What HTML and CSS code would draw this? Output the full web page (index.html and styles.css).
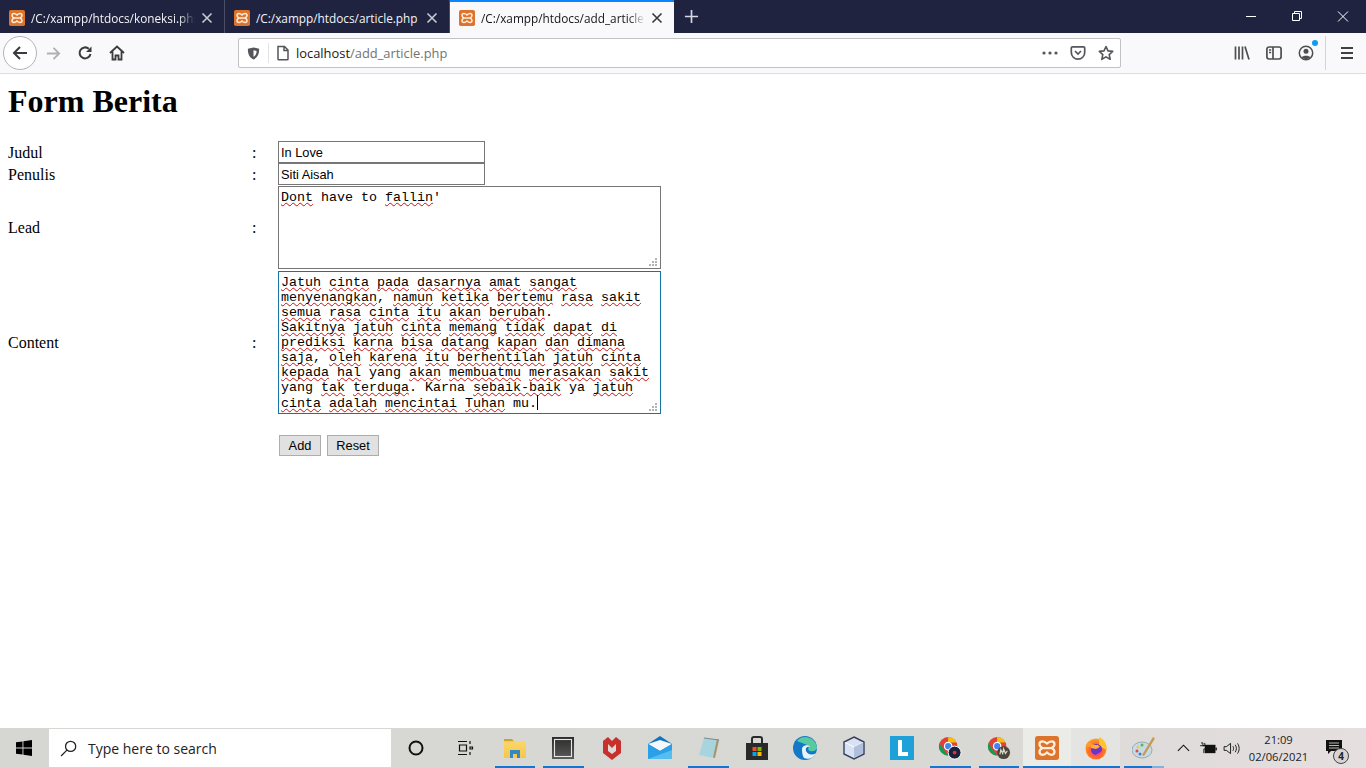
FILE: index.html
```html
<!DOCTYPE html>
<html lang="id">
<head>
<meta charset="utf-8">
<title>Form Berita</title>
<link rel="stylesheet" href="styles.css">
</head>
<body>
<svg class="defs" width="0" height="0" aria-hidden="true">
  <defs>
    <radialGradient id="fx" cx="50%" cy="60%" r="60%">
      <stop offset="0" stop-color="#ff3d7a"/>
      <stop offset=".55" stop-color="#ff6a2a"/>
      <stop offset="1" stop-color="#ffa51f"/>
    </radialGradient>
    <linearGradient id="blk" x1="0" y1="0" x2="0" y2="1">
      <stop offset="0" stop-color="#2c2c2c"/>
      <stop offset="1" stop-color="#5a5a5a"/>
    </linearGradient>
    <linearGradient id="fold" x1="0" y1="0" x2="0" y2="1">
      <stop offset="0" stop-color="#fcd66a"/>
      <stop offset="1" stop-color="#f5c64a"/>
    </linearGradient>
  </defs>
  <symbol id="xampp" viewBox="0 0 16 16">
    <rect x="0" y="0" width="16" height="16" rx="1.800" fill="#de742c"/>
    <path d="M5 3.500C3.500 3.500 3 4.500 3 5.500 3 6.500 3.800 7.400 5 8 3.800 8.600 3 9.500 3 10.500 3 11.500 3.500 12.500 5 12.500 6 12.500 7 12 8 11 9 12 10 12.500 11 12.500 12.500 12.500 13 11.500 13 10.500 13 9.500 12.200 8.600 11 8 12.200 7.400 13 6.500 13 5.500 13 4.500 12.500 3.500 11 3.500 10 3.500 9 4 8 5 7 4 6 3.500 5 3.500ZM5.500 8H10.500" fill="none" stroke="#fdeedd" stroke-width="1.500"/>
  </symbol>
  <symbol id="close" viewBox="0 0 12 12">
    <path d="M1.500 1.500l9 9M10.500 1.500l-9 9" fill="none" stroke="currentColor" stroke-width="1.600"/>
  </symbol>
  <symbol id="grip" viewBox="0 0 9 9">
    <path d="M6 0h2v2H6zM3 3h2v2H3zM6 3h2v2H6zM0 6h2v2H0zM3 6h2v2H3zM6 6h2v2H6z" fill="#b4b4b4"/>
  </symbol>
</svg>
<div class="window">
  <div class="tabbar">
    <div class="tab">
      <svg class="favicon"><use href="#xampp"/></svg>
      <span class="tab-title">/C:/xampp/htdocs/koneksi.php</span>
      <svg class="tab-close"><use href="#close"/></svg>
    </div>
    <div class="tab">
      <svg class="favicon"><use href="#xampp"/></svg>
      <span class="tab-title">/C:/xampp/htdocs/article.php</span>
      <svg class="tab-close"><use href="#close"/></svg>
    </div>
    <div class="tab tab-active">
      <svg class="favicon"><use href="#xampp"/></svg>
      <span class="tab-title">/C:/xampp/htdocs/add_article.php</span>
      <svg class="tab-close"><use href="#close"/></svg>
    </div>
    <svg class="newtab" viewBox="0 0 16 16"><path d="M8 1v14M1 8h14" stroke="#d6d7e0" stroke-width="1.800" fill="none"/></svg>
    <div class="win-controls">
      <svg class="win-btn" viewBox="0 0 46 33"><path d="M18 16.500h10" stroke="#fff" stroke-width="1" fill="none"/></svg>
      <svg class="win-btn" viewBox="0 0 46 33"><path d="M18.500 13.500h7v7h-7zM20.500 13.500v-2h7v7h-2" stroke="#fff" stroke-width="1" fill="none"/></svg>
      <svg class="win-btn" viewBox="0 0 46 33"><path d="M18 11.500l10 10M28 11.500l-10 10" stroke="#fff" stroke-width="1" fill="none"/></svg>
    </div>
  </div>
  <div class="toolbar">
    <div class="back-btn">
      <svg viewBox="0 0 18 18" class="ic"><path d="M16 9H3M9 3L3 9l6 6" fill="none" stroke="#3a3a3f" stroke-width="2"/></svg>
    </div>
    <svg viewBox="0 0 18 18" class="ic nav nav-fwd"><path d="M2 9h13M9 3l6 6-6 6" fill="none" stroke="#b1b1b3" stroke-width="2"/></svg>
    <svg viewBox="0 0 16 16" class="ic nav nav-reload"><path d="M13.500 9A5.500 5.500 0 1 1 11.800 3.800" fill="none" stroke="#3a3a3f" stroke-width="2"/><path d="M14.500 1.500v5.500H9z" fill="#3a3a3f"/></svg>
    <svg viewBox="0 0 16 16" class="ic nav"><path d="M1 8l7-6.500L15 8M3.500 6.500V14.500h3v-4h3v4h3V6.500" fill="none" stroke="#3a3a3f" stroke-width="1.800"/></svg>
    <div class="urlbar">
      <svg viewBox="0 0 16 16" class="ic shield"><path d="M8 1.500l6 1.500c0 5-1 9-6 11.500C3 12 2 8 2 3zM8 4.500l3.300.8C11.200 8 10.500 10 8 11.500z" fill="#55555b" fill-rule="evenodd"/></svg>
      <span class="url-sep"></span>
      <svg viewBox="0 0 16 16" class="ic page"><path d="M3 1.500h6.500L13 5v9a.8.8 0 0 1-.8.8H3.800A.8.8 0 0 1 3 14zM9 1.500V5.500h4" fill="none" stroke="#55555b" stroke-width="1.500"/></svg>
      <span class="url-text">localhost<span class="url-path">/add_article.php</span></span>
      <span class="url-space"></span>
      <svg viewBox="0 0 16 4" class="dots"><circle cx="2" cy="2" r="1.600" fill="#55555b"/><circle cx="8" cy="2" r="1.600" fill="#55555b"/><circle cx="14" cy="2" r="1.600" fill="#55555b"/></svg>
      <svg viewBox="0 0 16 16" class="ic pocket"><path d="M2.500 1.800h11a1.200 1.200 0 0 1 1.200 1.200v4.500a6.700 6.700 0 0 1-13.400 0V3a1.200 1.200 0 0 1 1.200-1.200zM5 6l3 3 3-3" fill="none" stroke="#55555b" stroke-width="1.700"/></svg>
      <svg viewBox="0 0 16 16" class="ic star"><path d="M8 1.500l2 4.400 4.700.5-3.500 3.200 1 4.700L8 11.900l-4.200 2.400 1-4.700L1.300 6.400 6 5.900z" fill="none" stroke="#55555b" stroke-width="1.600" stroke-linejoin="round"/></svg>
    </div>
    <div class="tools">
      <svg viewBox="0 0 16 16" class="ic"><path d="M1.500 1.500V14.500M5 1.500V14.500M8.500 1.500V14.500M11 1.500l4 13" fill="none" stroke="#4d4d52" stroke-width="1.700"/></svg>
      <svg viewBox="0 0 16 16" class="ic"><rect x=".9" y="2" width="14.200" height="12" rx="2.200" fill="none" stroke="#4d4d52" stroke-width="1.700"/><path d="M7 2v12" stroke="#4d4d52" stroke-width="1.700"/><path d="M3 5h2.200M3 7.500h2.200" stroke="#4d4d52" stroke-width="1.300"/></svg>
      <div class="account">
        <svg viewBox="0 0 16 16" class="ic"><circle cx="8" cy="8" r="6.700" fill="none" stroke="#4d4d52" stroke-width="1.500"/><circle cx="8" cy="6.300" r="2.500" fill="#4d4d52"/><path d="M3.500 12.500c1-2.500 8-2.500 9 0L8 14.500z" fill="#4d4d52"/></svg>
        <span class="badge"></span>
      </div>
      <span class="tool-sep"></span>
      <svg viewBox="0 0 16 16" class="ic"><path d="M2 3h12M2 8h12M2 13h12" stroke="#3f3f44" stroke-width="1.800"/></svg>
    </div>
  </div>

  <main class="page-content">
    <h1 class="title">Form Berita</h1>
    <form class="form">
      <div class="row row-input">
        <label class="lbl">Judul</label><span class="colon">:</span>
        <input class="text-input" type="text" value="In Love">
      </div>
      <div class="row row-input">
        <label class="lbl">Penulis</label><span class="colon">:</span>
        <input class="text-input" type="text" value="Siti Aisah">
      </div>
      <div class="row row-lead">
        <label class="lbl">Lead</label><span class="colon">:</span>
        <div class="area area-lead"><span class="sp">Dont</span> have to <span class="sp">fallin</span>'<svg class="grip"><use href="#grip"/></svg></div>
      </div>
      <div class="row row-content">
        <label class="lbl">Content</label><span class="colon">:</span>
        <div class="area area-content"><span class="sp">Jatuh</span> <span class="sp">cinta</span> <span class="sp">pada</span> <span class="sp">dasarnya</span> <span class="sp">amat</span> <span class="sp">sangat</span>
<span class="sp">menyenangkan</span>, <span class="sp">namun</span> <span class="sp">ketika</span> <span class="sp">bertemu</span> <span class="sp">rasa</span> <span class="sp">sakit</span>
<span class="sp">semua</span> <span class="sp">rasa</span> <span class="sp">cinta</span> <span class="sp">itu</span> <span class="sp">akan</span> <span class="sp">berubah</span>.
<span class="sp">Sakitnya</span> <span class="sp">jatuh</span> <span class="sp">cinta</span> <span class="sp">memang</span> <span class="sp">tidak</span> <span class="sp">dapat</span> <span class="sp">di</span>
<span class="sp">prediksi</span> <span class="sp">karna</span> <span class="sp">bisa</span> <span class="sp">datang</span> <span class="sp">kapan</span> <span class="sp">dan</span> <span class="sp">dimana</span>
<span class="sp">saja</span>, <span class="sp">oleh</span> <span class="sp">karena</span> <span class="sp">itu</span> <span class="sp">berhentilah</span> <span class="sp">jatuh</span> <span class="sp">cinta</span>
<span class="sp">kepada</span> <span class="sp">hal</span> yang <span class="sp">akan</span> <span class="sp">membuatmu</span> <span class="sp">merasakan</span> <span class="sp">sakit</span>
yang <span class="sp">tak</span> <span class="sp">terduga</span>. Karna <span class="sp">sebaik-baik</span> ya <span class="sp">jatuh</span>
<span class="sp">cinta</span> <span class="sp">adalah</span> <span class="sp">mencintai</span> <span class="sp">Tuhan</span> mu.<span class="caret"></span><svg class="grip"><use href="#grip"/></svg></div>
      </div>
      <div class="actions">
        <button class="btn btn-add" type="button">Add</button>
        <button class="btn btn-reset" type="button">Reset</button>
      </div>
    </form>
  </main>

  <footer class="taskbar">
    <div class="start">
      <svg viewBox="0 0 16 16" class="win-logo"><path d="M0 2.300L6.500 1.400V7.500H0zM7.400 1.300L16 0V7.500H7.400zM0 8.500H6.500V14.600L0 13.700zM7.400 8.500H16V16L7.400 14.700z" fill="#000"/></svg>
    </div>
    <div class="search">
      <svg viewBox="0 0 16 16" class="search-ic"><circle cx="10" cy="6" r="4.800" fill="none" stroke="#222" stroke-width="1.200"/><path d="M6.500 9.500L1 15" stroke="#222" stroke-width="1.200"/></svg>
      <span class="search-text">Type here to search</span>
    </div>
    <div class="tb-item"><svg viewBox="0 0 18 18" class="tb-ic"><circle cx="9" cy="9" r="6.500" fill="none" stroke="#111" stroke-width="2"/></svg></div>
    <div class="tb-item"><svg viewBox="0 0 18 18" class="tb-ic"><path d="M2 2.500h9M2 15.500h9M3.500 6h7v6h-7zM14 2v3M14 8h2.500v2H14zM14 13v3" fill="none" stroke="#111" stroke-width="1.200"/></svg></div>
    <div class="tb-item tb-on tb-first"><svg viewBox="0 0 24 24" class="tb-ic-lg"><path d="M1 3h8l2 2.500H1z" fill="#cfa32a"/><path d="M1 5.500h22V22H1z" fill="url(#fold)"/><path d="M7 14h10v8h-3v-4h-4v4H7z" fill="#3389c4"/></svg></div>
    <div class="tb-item tb-on"><svg viewBox="0 0 24 24" class="tb-ic-lg"><rect x="1" y="1" width="22" height="22" fill="url(#blk)"/><rect x="3.500" y="3.500" width="17" height="17" fill="none" stroke="#e6e6e6" stroke-width="1.100"/></svg></div>
    <div class="tb-item"><svg viewBox="0 0 24 24" class="tb-ic-lg"><path d="M3 5L8 1l4 4 4-4 5 4v12l-9 7-9-7z" fill="#c8302c"/><path d="M8 8l4 4 4-4v7l-4 3-4-3z" fill="#dcdbd8"/></svg></div>
    <div class="tb-item"><svg viewBox="0 0 24 24" class="tb-ic-lg"><path d="M0 8L12 0l12 8v15H0z" fill="#0f73bf"/><path d="M0 8l12-4 12 4-12 7z" fill="#f4f8fb"/><path d="M0 8l12 7 12-7v15H0z" fill="#2aa0e6"/><path d="M0 23l24-9v9z" fill="#56bdf0"/></svg></div>
    <div class="tb-item tb-on"><svg viewBox="0 0 24 24" class="tb-ic-lg"><path d="M7 2l15 2-5 18-15-3z" fill="#a8d4de"/><path d="M20 3l2 1-4 18-2-.5z" fill="#a99468"/><path d="M7 2l15 2" stroke="#7a8a92" stroke-width="1"/></svg></div>
    <div class="tb-item"><svg viewBox="0 0 24 24" class="tb-ic-lg"><path d="M1 7h22v17H1z" fill="#2a2a2a"/><path d="M7 8V3a2 2 0 0 1 2-2h6a2 2 0 0 1 2 2v5" fill="none" stroke="#2a2a2a" stroke-width="2"/><rect x="7.500" y="11" width="4" height="4" fill="#f25022"/><rect x="12.500" y="11" width="4" height="4" fill="#7fba00"/><rect x="7.500" y="16" width="4" height="4" fill="#00a4ef"/><rect x="12.500" y="16" width="4" height="4" fill="#ffb900"/></svg></div>
    <div class="tb-item"><svg viewBox="0 0 24 24" class="tb-ic-lg"><circle cx="12" cy="12" r="12" fill="#1478c8"/><path d="M4 5c5-7 18-5 20 6 .5 3-3 5-7 4-2.500-1-2-3-1-4-1.500-3-8-4-12-6z" fill="#58c9a0"/><path d="M9 13c0-4 7-5 8-2-3-1-5 1-4 4 1 3 6 5 10 2-2 5-8 7-12 5-1.500-2-2-6-2-9z" fill="#e8f4f8"/></svg></div>
    <div class="tb-item"><svg viewBox="0 0 24 24" class="tb-ic-lg"><path d="M12 1l10 5v12l-10 5-10-5V6z" fill="#d8e2f2" stroke="#36405e" stroke-width="1.400"/><path d="M3 6.500l9 4.500 9-4.500" fill="none" stroke="#fff" stroke-width="1"/><path d="M12 11v11l9-4.500v-11z" fill="#b0c0dc"/></svg></div>
    <div class="tb-item"><svg viewBox="0 0 24 24" class="tb-ic-lg"><rect width="24" height="24" fill="#1ea0d8"/><path d="M8 4h4v12h6v4H8z" fill="#fff"/></svg></div>
    <div class="tb-item tb-on"><svg viewBox="0 0 26 26" class="tb-ic-lg"><circle cx="11" cy="11" r="10" fill="#db4437"/><path d="M11 1a10 10 0 0 1 9 6H11z" fill="#f4c20d"/><path d="M1.500 8L7 16l4 5a10 10 0 0 1-9.500-13z" fill="#0f9d58"/><circle cx="11" cy="11" r="4" fill="#4285f4" stroke="#fff" stroke-width="1.300"/><circle cx="18" cy="18" r="7" fill="#16233d" stroke="#fff" stroke-width="1"/><circle cx="18" cy="18" r="2" fill="#e03040"/></svg></div>
    <div class="tb-item tb-on"><svg viewBox="0 0 26 26" class="tb-ic-lg"><circle cx="11" cy="11" r="10" fill="#db4437"/><path d="M11 1a10 10 0 0 1 9 6H11z" fill="#f4c20d"/><path d="M1.500 8L7 16l4 5a10 10 0 0 1-9.500-13z" fill="#0f9d58"/><circle cx="11" cy="11" r="4" fill="#4285f4" stroke="#fff" stroke-width="1.300"/><circle cx="18" cy="18" r="7" fill="#4a463c"/><path d="M14 20l1-5 2 4 1-5 2 5 2-3" stroke="#dcd8cc" stroke-width="1.300" fill="none"/></svg></div>
    <div class="tb-item tb-on tb-active"><svg viewBox="0 0 24 24" class="tb-ic-lg"><use href="#xampp"/></svg></div>
    <div class="tb-item tb-on tb-hover"><svg viewBox="0 0 24 24" class="tb-ic-lg"><circle cx="12" cy="13" r="10.500" fill="url(#fx)"/><path d="M15 1c5 2 8.500 7 7.500 13L15 10z" fill="#ffc52e"/><path d="M1.500 11c.5-3 2-5 4-6 0 1.500 1 2.500 2.500 2.500l3 2.500z" fill="#ff9d2a"/><circle cx="12.500" cy="13.500" r="5.500" fill="#6a35c8"/><path d="M7 9h7l2 2-4 2-5-1z" fill="#ffb02a"/><path d="M9 20c4 1 8-1 9-5-2 2-5 3-9 5z" fill="#ff4a6e"/></svg></div>
    <div class="tb-item tb-on tb-paint"><svg viewBox="0 0 24 24" class="tb-ic-lg"><ellipse cx="10" cy="14" rx="10" ry="8" fill="#c6dbe4" stroke="#7d99a8" stroke-width=".7"/><circle cx="6" cy="11" r="1.500" fill="#e3d04a"/><circle cx="10" cy="9" r="1.500" fill="#58b558"/><circle cx="5" cy="15" r="1.500" fill="#d05050"/><circle cx="8" cy="18" r="1.500" fill="#4a7ad0"/><path d="M21 1l2 1.500L12 20l-2-1z" fill="#c99a55"/></svg></div>
    <div class="tray">
      <svg viewBox="0 0 14 8" class="chev"><path d="M1 7l6-6 6 6" fill="none" stroke="#111" stroke-width="1.200"/></svg>
      <svg viewBox="0 0 18 14" class="batt"><path d="M1 1h2v3h2V1M0 4h6v3.500H4V12" fill="none" stroke="#111" stroke-width="1"/><rect x="5" y="3" width="11.500" height="9" fill="#111"/><rect x="16.500" y="6" width="1.500" height="3" fill="#111"/></svg>
      <svg viewBox="0 0 18 14" class="vol"><path d="M1 5h2.500L8 1.500v11L3.500 9H1z" fill="none" stroke="#111"/><path d="M10.500 4.500c1 1.500 1 3.500 0 5M13 3c1.700 2.500 1.700 5.500 0 8M15.500 1.500c2.300 3.500 2.300 7.500 0 11" fill="none" stroke="#111"/></svg>
      <div class="clock"><span>21:09</span><span>02/06/2021</span></div>
      <div class="notif">
        <svg viewBox="0 0 16 16" class="notif-ic"><path d="M0 0h16v11H5l-3 3v-3H0z" fill="#111"/><path d="M3 3h10M3 5.500h10M3 8h10" stroke="#e8e4e4" stroke-width=".8"/></svg>
        <span class="notif-count">4</span>
      </div>
    </div>
  </footer>
</div>
</body>
</html>
```

FILE: styles.css
```css
* { box-sizing: border-box; }
html, body { margin: 0; padding: 0; height: 100%; overflow: hidden; }
body { background: #fff; color: #000; font-family: "Liberation Serif", serif; }
.defs { position: absolute; }
.window { display: flex; flex-direction: column; width: 1366px; height: 768px; }

/* Tabs */
.tabbar { display: flex; flex: 0 0 33px; height: 33px; background: #1f2340; color: #f3f3f6; align-items: stretch; }
.tab { display: flex; align-items: center; width: 225px; padding: 2px 9px 0 9px; border-right: 1px solid #4a4d66; font: 11.800px "Open Sans", sans-serif; }
.tab-active { width: 224px; background: #f9f9fb; color: #15141a; border-right: 0; border-top: 2px solid #0a84ff; padding-top: 0; }
.favicon { width: 16px; height: 16px; flex: none; margin-right: 6px; }
.tab-title { flex: 1; min-width: 0; overflow: hidden; white-space: nowrap; -webkit-mask-image: linear-gradient(to right, #000 90%, transparent 100%); mask-image: linear-gradient(to right, #000 90%, transparent 100%); }
.tab:nth-child(2) .tab-title { -webkit-mask-image: none; mask-image: none; }
.tab-close { width: 12px; height: 12px; flex: none; margin-left: 6px; margin-right: 2px; color: #c9cad4; }
.tab-active .tab-close { color: #36363c; }
.newtab { width: 15px; height: 15px; flex: none; align-self: center; margin-left: 10px; }
.win-controls { margin-left: auto; display: flex; }
.win-btn { width: 46px; height: 33px; display: block; }

/* Toolbar */
.toolbar { flex: 0 0 41px; height: 41px; display: flex; align-items: center; background: #f9f9fb; border-bottom: 1px solid #dedee0; padding: 0 11px 0 3px; }
.ic { width: 16px; height: 16px; flex: none; display: block; }
.back-btn { width: 34px; height: 34px; flex: none; border: 1px solid #b4b4b6; border-radius: 50%; background: #fff; display: flex; align-items: center; justify-content: center; }
.back-btn .ic { width: 18px; height: 18px; }
.nav { margin-left: 16px; }
.nav-fwd { margin-left: 8px; width: 17px; height: 17px; }
.nav-reload { margin-left: 15px; }
.urlbar { width: 883px; height: 30px; margin-left: 113px; flex: none; display: flex; align-items: center; background: #fff; border: 1px solid #c2c2c4; border-radius: 2px; padding: 0 6px 0 7px; }
.shield { width: 15px; height: 15px; }
.url-sep { width: 1px; height: 20px; background: #e3e3e5; margin: 0 6px 0 7px; }
.url-text { margin-left: 5px; font: 12.900px "Open Sans", sans-serif; color: #18181c; white-space: nowrap; }
.url-path { color: #737373; }
.url-space { flex: 1; }
.dots { width: 16px; height: 4px; flex: none; margin-right: 12px; }
.pocket { width: 16px; height: 16px; margin-right: 12px; }
.tools { display: flex; align-items: center; margin-left: 113px; gap: 16px; }
.account { position: relative; width: 16px; height: 16px; }
.badge { position: absolute; right: -4px; top: -5px; width: 6px; height: 6px; border-radius: 50%; background: #0a9ff0; }
.tool-sep { width: 1px; height: 34px; background: #d4d4d6; margin: 0 -3px 0 -5px; }

/* Page */
.page-content { flex: 1; min-height: 0; background: #fff; padding: 0 8px; }
.title { margin: 9px 0 21px; font: bold 32px/37px "Liberation Serif", serif; }
.form { font: 16px "Liberation Serif", serif; }
.row { display: grid; grid-template-columns: 244px 26px auto; justify-content: start; align-items: center; }
.row-input .lbl, .row-input .colon { padding-top: 2px; }
.row-lead { margin-top: 1px; }
.row-content { margin-top: 2px; }
.colon { display: block; }
.text-input { display: block; width: 207px; height: 22px; padding: 1px 2px; margin: 0; border: 1px solid #767676; background: #fff; color: #000; font: 12.800px "Liberation Sans", sans-serif; border-radius: 0; outline: 0; }
.area { position: relative; width: 383px; border: 1px solid #767676; padding: 3px 2px 1px; font: 13.333px/15px "Liberation Mono", monospace; white-space: pre; background: #fff; }
.area-lead { height: 83px; }
.area-content { height: 143px; border-color: #1673a6; }
.sp { text-decoration: underline wavy #cc1010 1px; text-decoration-skip-ink: none; text-underline-offset: 1px; }
.caret { display: inline-block; width: 1px; height: 15px; background: #000; vertical-align: -3px; }
.grip { position: absolute; right: 2px; bottom: 1px; width: 9px; height: 9px; }
.actions { display: flex; gap: 6px; margin: 21px 0 0 271px; }
.btn { height: 21px; padding: 0; border: 1px solid #adadad; background: #e1e1e1; color: #000; font: 12.800px "Liberation Sans", sans-serif; border-radius: 0; }
.btn-add { width: 42px; }
.btn-reset { width: 52px; }

/* Taskbar */
.taskbar { flex: 0 0 40px; height: 40px; display: flex; align-items: stretch; background: linear-gradient(to right, #d6d6d3 0%, #d8d8d4 70%, #e6dfe0 100%); }
.start { width: 48px; flex: none; display: flex; align-items: center; justify-content: center; }
.win-logo { width: 16px; height: 16px; }
.search { width: 342px; flex: none; margin: 1px 0 1px 1px; background: #fff; display: flex; align-items: center; padding-left: 11px; }
.search-ic { width: 17px; height: 17px; flex: none; }
.search-text { margin-left: 11px; font: 14px "Open Sans", sans-serif; color: #222; }
.tb-item { width: 48.400px; flex: none; display: flex; align-items: center; justify-content: center; position: relative; }
.search + .tb-item { margin-left: 1px; }
.tb-first { margin-left: 2px; }
.tb-on::after { content: ""; position: absolute; left: 4px; right: 4px; bottom: 0; height: 2px; background: #0f78d4; }
.tb-active { background: #ebebe8; }
.tb-active::after, .tb-hover::after { left: 0; right: 0; }
.tb-hover { background: #e4e4e2; }
.tb-paint::after { background: linear-gradient(to right, #0f78d4 70%, #7db3e0 70%); }
.tb-ic { width: 18px; height: 18px; }
.tb-ic-lg { width: 24px; height: 24px; }
.tray { margin-left: auto; display: flex; align-items: center; }
.chev { width: 13px; height: 8px; margin-right: 10px; }
.batt { width: 17px; height: 13px; margin-right: 6px; }
.vol { width: 17px; height: 13px; }
.clock { width: 75px; margin-left: 1px; display: flex; flex-direction: column; align-items: center; font: 11.200px/17px "Open Sans", sans-serif; color: #222; }
.notif { position: relative; width: 40px; height: 40px; margin-left: 10px; }
.notif-ic { position: absolute; left: 0; top: 12px; width: 16px; height: 16px; }
.notif-count { position: absolute; left: 7px; top: 20px; width: 16px; height: 16px; border-radius: 50%; background: #d8d4d4; border: 1px solid #444; font: bold 10px/14px "Open Sans", sans-serif; text-align: center; color: #222; }
```
